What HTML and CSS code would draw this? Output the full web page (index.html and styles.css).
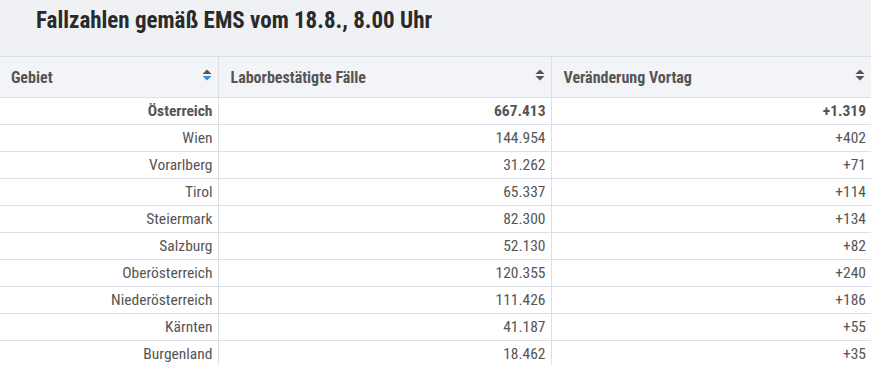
FILE: index.html
```html
<!DOCTYPE html>
<html lang="de">
<head>
<meta charset="utf-8">
<title>Fallzahlen</title>
<link rel="stylesheet" href="styles.css">
</head>
<body>
<div class="wrap">
  <h1 class="title">Fallzahlen gemäß EMS vom 18.8., 8.00 Uhr</h1>
  <table class="tbl">
    <colgroup><col class="c1"><col class="c2"><col class="c3"></colgroup>
    <thead>
      <tr>
        <th><span>Gebiet</span><svg class="sort" viewBox="0 0 10 12" width="10" height="12"><path d="M5 0.5 L9.5 5 H0.5 Z" fill="#555"/><path d="M5 11.5 L9.5 7 H0.5 Z" fill="#3b8ee6"/></svg></th>
        <th><span>Laborbestätigte Fälle</span><svg class="sort" viewBox="0 0 10 12" width="10" height="12"><path d="M5 0.5 L9.5 5 H0.5 Z" fill="#555"/><path d="M5 11.5 L9.5 7 H0.5 Z" fill="#555"/></svg></th>
        <th><span>Veränderung Vortag</span><svg class="sort" viewBox="0 0 10 12" width="10" height="12"><path d="M5 0.5 L9.5 5 H0.5 Z" fill="#555"/><path d="M5 11.5 L9.5 7 H0.5 Z" fill="#555"/></svg></th>
      </tr>
    </thead>
    <tbody>
      <tr class="total"><td>Österreich</td><td>667.413</td><td>+1.319</td></tr>
      <tr><td>Wien</td><td>144.954</td><td>+402</td></tr>
      <tr><td>Vorarlberg</td><td>31.262</td><td>+71</td></tr>
      <tr><td>Tirol</td><td>65.337</td><td>+114</td></tr>
      <tr><td>Steiermark</td><td>82.300</td><td>+134</td></tr>
      <tr><td>Salzburg</td><td>52.130</td><td>+82</td></tr>
      <tr><td>Oberösterreich</td><td>120.355</td><td>+240</td></tr>
      <tr><td>Niederösterreich</td><td>111.426</td><td>+186</td></tr>
      <tr><td>Kärnten</td><td>41.187</td><td>+55</td></tr>
      <tr><td>Burgenland</td><td>18.462</td><td>+35</td></tr>
    </tbody>
  </table>
</div>
</body>
</html>
```
FILE: styles.css
```css
html, body {
  margin: 0;
  padding: 0;
  background: #ffffff;
}
body {
  font-family: "Roboto", "DejaVu Sans Condensed", sans-serif;
  font-stretch: 75%;
  color: #555555;
}
.wrap {
  width: 871px;
}
.title {
  margin: 0;
  height: 56px;
  box-sizing: border-box;
  padding: 6px 0 0 36px;
  background: #eff1f5;
  font-size: 23px;
  font-weight: 700;
  color: #2a2a2a;
  line-height: 30px;
}
.tbl {
  width: 871px;
  border-collapse: collapse;
  table-layout: fixed;
}
.c1 { width: 218px; }
.c2 { width: 333px; }
.c3 { width: 320px; }
.tbl th {
  height: 40px;
  padding: 0 6px 0 11px;
  background: #f3f4f7;
  border: 1px solid #dcdfe6;
  border-left: none;
  text-align: left;
  font-size: 16px;
  font-weight: 700;
  color: #555555;
}
.tbl th + th {
  border-left: 1px solid #dcdfe6;
  padding-left: 12px;
}
.tbl th:last-child { border-right: none; }
.tbl th span {
  display: inline-block;
  vertical-align: middle;
}
.tbl th .sort {
  float: right;
  margin-top: 2px;
}
.tbl td {
  height: 26px;
  padding: 0 5px 0 5px;
  border-bottom: 1px solid #dcdfe6;
  text-align: right;
  font-size: 15.5px;
  color: #555555;
}
.tbl td + td {
  border-left: 1px solid #dcdfe6;
}
.tbl tr.total td {
  font-weight: 700;
}
```
